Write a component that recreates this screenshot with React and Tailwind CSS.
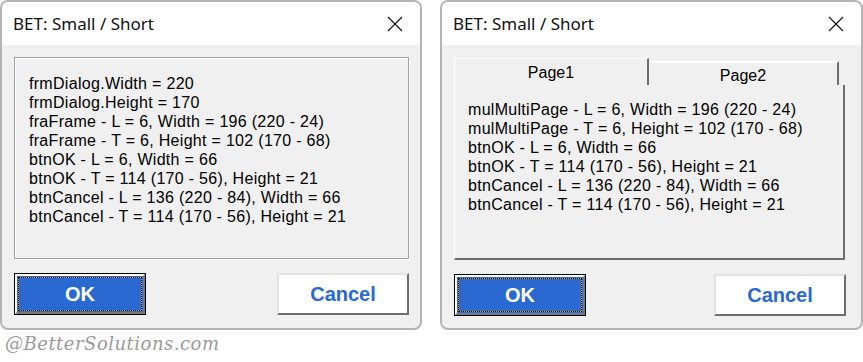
const blue = "text-[#2a69d2]";

const CloseX = () => (
  <svg width="16" height="16" viewBox="0 0 16 16" className="shrink-0">
    <path d="M1 1 L15 15 M15 1 L1 15" stroke="#1a1a1a" strokeWidth="1.3" fill="none" />
  </svg>
);

const OkButton = () => (
  <div className="w-[132px] h-[42px] border border-black flex">
    <div className="flex-1 flex border-2 border-t-white border-l-white border-r-[#7a7a7a] border-b-[#7a7a7a] bg-[#2a69d2] p-px">
      <div className="flex-1 flex border border-dotted border-black bg-[#d9a040]">
        <div className="flex-1 bg-[#2a69d2] flex items-center justify-center text-white font-bold text-[20px]">
          OK
        </div>
      </div>
    </div>
  </div>
);

const CancelButton = () => (
  <div
    className={`w-[132px] h-[42px] bg-white flex items-center justify-center border-2 border-t-[#e3e3e3] border-l-[#e3e3e3] border-r-[#6e6e6e] border-b-[#6e6e6e] font-bold text-[20px] ${blue}`}
  >
    Cancel
  </div>
);

const Dialog = ({ children, width }) => (
  <div
    className={`${width} h-[330px] shrink-0 border-2 border-[#b4b4b4] rounded-[8px] overflow-hidden flex flex-col bg-[#f0f0f0]`}
  >
    <div className="h-[43px] bg-white flex items-center justify-between pl-[11px] pr-[17px]">
      <span className="text-[17px] text-[#111] font-['Noto_Sans',sans-serif]">BET: Small / Short</span>
      <CloseX />
    </div>
    {children}
  </div>
);

const Lines = ({ lines }) => (
  <div className="text-[16px] leading-[19px] tracking-[0.3px] text-black">
    {lines.map((l) => (
      <div key={l}>{l}</div>
    ))}
  </div>
);

const frameLines = [
  "frmDialog.Width = 220",
  "frmDialog.Height = 170",
  "fraFrame - L = 6, Width = 196 (220 - 24)",
  "fraFrame - T = 6, Height = 102 (170 - 68)",
  "btnOK - L = 6, Width = 66",
  "btnOK - T = 114 (170 - 56), Height = 21",
  "btnCancel - L = 136 (220 - 84), Width = 66",
  "btnCancel - T = 114 (170 - 56), Height = 21",
];

const pageLines = [
  "mulMultiPage - L = 6, Width = 196 (220 - 24)",
  "mulMultiPage - T = 6, Height = 102 (170 - 68)",
  "btnOK - L = 6, Width = 66",
  "btnOK - T = 114 (170 - 56), Height = 21",
  "btnCancel - L = 136 (220 - 84), Width = 66",
  "btnCancel - T = 114 (170 - 56), Height = 21",
];

export default function App() {
  return (
    <div className="w-[863px] h-[362px] bg-white font-['Liberation_Sans',Arial,sans-serif] overflow-hidden">
      <div className="flex gap-[18px]">
        <Dialog width="w-[422px]">
          <div className="flex-1 flex flex-col pl-[12px] pr-[11px] pt-[12px]">
            <div className="w-[395px] h-[202px] border border-[#a0a0a0] shadow-[1px_1px_0_#ffffff,inset_1px_1px_0_#ffffff] pl-[14px] pt-[16px]">
              <Lines lines={frameLines} />
            </div>
            <div className="flex justify-between mt-[14px]">
              <OkButton />
              <CancelButton />
            </div>
          </div>
        </Dialog>

        <Dialog width="w-[423px]">
          <div className="flex-1 flex flex-col pl-[12px] pr-[15px] pt-[13px]">
            <div className="w-[391px] flex flex-col">
              <div className="flex items-end h-[27px]">
                <div className="w-[195px] h-[27px] border-t border-l border-white border-r-2 border-r-[#6e6e6e] flex justify-center pt-[2px] text-[16px]">
                  Page1
                </div>
                <div className="w-[190px] h-[24px] border-t-2 border-t-white border-r-2 border-r-[#6e6e6e] flex justify-center pt-[1px] text-[16px]">
                  Page2
                </div>
              </div>
              <div className="h-[175px] border-l border-l-white border-r-2 border-r-[#6e6e6e] border-b-2 border-b-[#6e6e6e] pl-[13px] pt-[15px]">
                <Lines lines={pageLines} />
              </div>
            </div>
            <div className="flex justify-between mt-[14px] pr-0">
              <OkButton />
              <CancelButton />
            </div>
          </div>
        </Dialog>
      </div>
      <div className="pl-[5px] pt-[2px] text-[18px] italic tracking-[0.5px] text-[#9a9a9a] font-['DejaVu_Serif',serif] leading-[24px]">
        @BetterSolutions.com
      </div>
    </div>
  );
}
